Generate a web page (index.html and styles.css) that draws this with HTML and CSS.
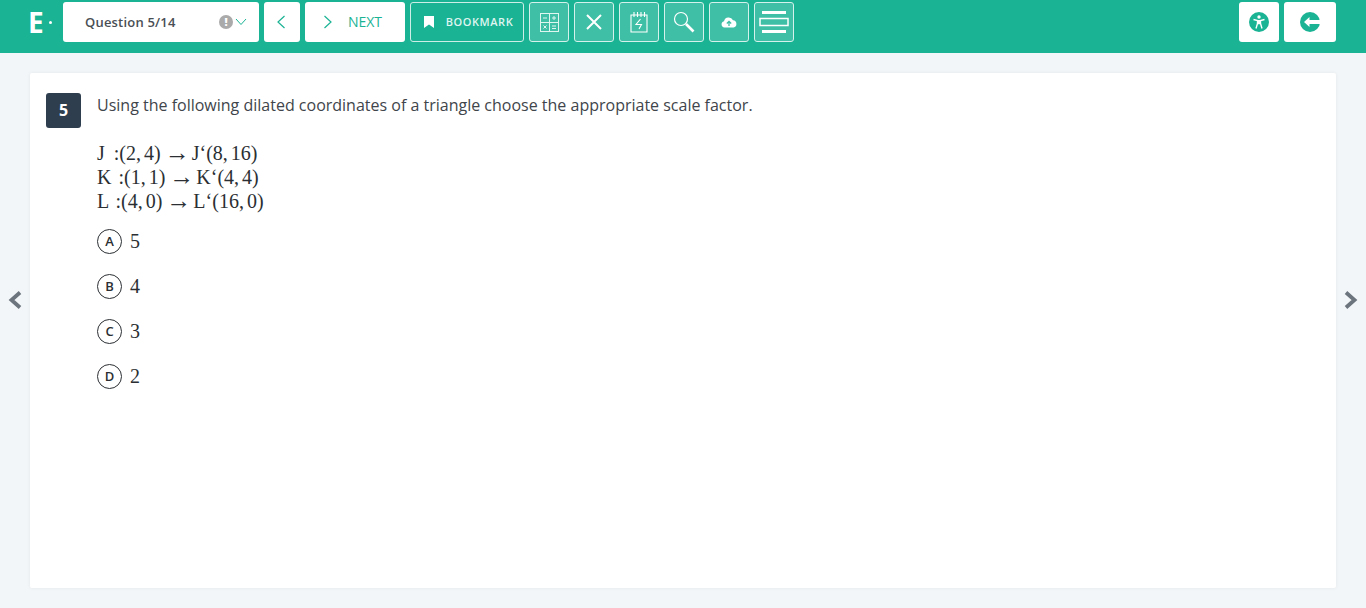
FILE: index.html
```html
<!DOCTYPE html>
<html lang="en">
<head>
<meta charset="utf-8">
<title>Question 5/14</title>
<link rel="stylesheet" href="styles.css">
</head>
<body>
<header class="topbar">
  <div class="brand"><span class="brand-e">E</span><span class="brand-dot"></span></div>
  <div class="select">
    <span class="select-label">Question 5/14</span>
    <span class="alert">!</span>
    <svg class="chev" width="12" height="8" viewBox="0 0 12 8"><path d="M1 1l5 5.500L11 1" fill="none" stroke="#1ab394" stroke-width="1"/></svg>
  </div>
  <button class="btn btn-white btn-prev"><svg width="10" height="14" viewBox="0 0 10 14"><path d="M8.500 1L2 7l6.500 6" fill="none" stroke="#1ab394" stroke-width="1.200"/></svg></button>
  <button class="btn btn-white btn-next"><svg width="10" height="14" viewBox="0 0 10 14"><path d="M1.500 1L8 7l-6.500 6" fill="none" stroke="#1ab394" stroke-width="1.200"/></svg><span>NEXT</span></button>
  <button class="btn btn-outline btn-bookmark"><svg width="10" height="12" viewBox="0 0 10 12"><path d="M0 0h10v12L5 8.500 0 12z" fill="#fff"/></svg><span>BOOKMARK</span></button>
  <button class="btn btn-tool"><svg width="19" height="19" viewBox="0 0 19 19" fill="none" stroke="#dff5f0" stroke-width="1"><rect x=".5" y=".5" width="18" height="18"/><path d="M9.500 .5v18M.5 9.500h18M3 5h4M12 5h4M14 3v4M3.500 12.500l3 3M6.500 12.500l-3 3M12 13h4M12 15.500h4"/></svg></button>
  <button class="btn btn-tool"><svg width="18" height="18" viewBox="0 0 18 18"><path d="M2 2l14 14M16 2L2 16" fill="none" stroke="#fff" stroke-width="2"/></svg></button>
  <button class="btn btn-tool"><svg width="18" height="22" viewBox="0 0 18 22" fill="none" stroke="#fff" stroke-width="1.100"><path d="M1 4h16v17H1zM4 1v5M7.500 1v5M11 1v5M14.500 1v5"/><path d="M10.500 8L6 13.500h5.500L9 18"/></svg></button>
  <button class="btn btn-tool"><svg width="22" height="22" viewBox="0 0 22 22" fill="none" stroke="#fff"><circle cx="8" cy="8" r="6.500" stroke-width="1.200"/><path d="M13 13l7.500 7.500" stroke-width="2.600"/></svg></button>
  <button class="btn btn-tool"><svg width="16" height="12" viewBox="0 0 16 12"><path d="M3.500 11.500a3.200 3.200 0 0 1-.5-6.300A4.800 4.800 0 0 1 12 4.200a3.700 3.700 0 0 1 .500 7.300z" fill="#fff"/><path d="M8 10V5.500M5.800 7.500L8 5.300l2.200 2.200" fill="none" stroke="#3fbfa5" stroke-width="1.300"/></svg></button>
  <button class="btn btn-tool"><svg width="30" height="22" viewBox="0 0 30 22" fill="none" stroke="#fff"><path d="M3 1.500h24M3 20.500h24" stroke-width="3"/><rect x="1" y="7.500" width="28" height="7" stroke-width="1.500"/></svg></button>
  <div class="topbar-right">
    <button class="btn btn-white btn-access"><svg width="20" height="20" viewBox="0 0 20 20"><circle cx="10" cy="10" r="10" fill="#1ab394"/><circle cx="10" cy="5" r="1.700" fill="#fff"/><path d="M4.500 7.500l4 1v3L7 16.500M15.500 7.500l-4 1v3l1.500 5M8.500 11.500h3" fill="none" stroke="#fff" stroke-width="1.400"/><rect x="8.500" y="8" width="3" height="3.500" fill="#fff"/></svg></button>
    <button class="btn btn-white btn-exit"><svg width="20" height="20" viewBox="0 0 20 20"><circle cx="10" cy="10" r="10" fill="#1ab394"/><path d="M4 10l5.500-5v3H20v4H9.500v3z" fill="#fff"/></svg></button>
  </div>
</header>
<button class="side-arrow side-left"><svg width="14" height="18" viewBox="0 0 14 18"><path d="M12 1.500L3.500 9l8.500 7.500" fill="none" stroke="#6c757d" stroke-width="3.800"/></svg></button>
<button class="side-arrow side-right"><svg width="14" height="18" viewBox="0 0 14 18"><path d="M2 1.500L10.500 9 2 16.500" fill="none" stroke="#6c757d" stroke-width="3.800"/></svg></button>
<main class="card">
  <div class="qnum">5</div>
  <div class="qbody">
    <p class="qtext">Using the following dilated coordinates of a triangle choose the appropriate scale factor.</p>
    <div class="math-block">
      <div><span class="pt pt-wide">J :</span><span class="tuple">(2, 4)</span><span class="arrow">→</span>J‘<span class="tuple">(8, 16)</span></div>
      <div><span class="pt">K :</span><span class="tuple">(1, 1)</span><span class="arrow">→</span>K‘<span class="tuple">(4, 4)</span></div>
      <div><span class="pt">L :</span><span class="tuple">(4, 0)</span><span class="arrow">→</span>L‘<span class="tuple">(16, 0)</span></div>
    </div>
    <div class="options">
      <div class="option"><span class="bubble">A</span><span class="opt-val">5</span></div>
      <div class="option"><span class="bubble">B</span><span class="opt-val">4</span></div>
      <div class="option"><span class="bubble">C</span><span class="opt-val">3</span></div>
      <div class="option"><span class="bubble">D</span><span class="opt-val">2</span></div>
    </div>
  </div>
</main>
</body>
</html>
```
FILE: styles.css
```css
* { box-sizing: border-box; }
html, body { height: 100%; }
body { margin: 0; height: 608px; overflow: hidden; background: #f3f6f9; font-family: "Open Sans", sans-serif; color: #343a40; position: relative; }
button { font-family: inherit; padding: 0; margin: 0; }

.topbar { height: 53px; background: #1ab394; display: flex; align-items: flex-start; padding: 2px 30px 0 28px; gap: 5px; }
.brand { width: 30px; height: 40px; display: flex; align-items: center; color: #fff; }
.brand-e { font-size: 28px; font-weight: 700; line-height: 40px; }
.brand-dot { width: 3px; height: 3px; border-radius: 50%; background: #fff; margin-left: 5px; }
.select { width: 196px; height: 40px; background: #fff; border-radius: 3px; display: flex; align-items: center; padding-left: 22px; position: relative; }
.select-label { font-size: 13px; font-weight: 560; color: #4a4f55; letter-spacing: .2px; flex: 1; }
.alert { width: 14px; height: 14px; border-radius: 50%; background: #aaa; color: #fff; font-size: 11px; font-weight: 800; line-height: 14px; text-align: center; margin-right: 2px; }
.chev { margin-right: 12px; }

.btn { height: 40px; border-radius: 3px; display: flex; align-items: center; justify-content: center; cursor: pointer; }
.btn-white { background: #fff; border: 0; }
.btn-prev { width: 36px; padding-right: 3px; }
.btn-next { width: 100px; gap: 15px; padding-right: 5px; padding-bottom: 1px; color: #1ab394; font-size: 14px; }
.btn-outline { width: 114px; background: transparent; border: 1px solid #cdeee7; color: #dff5f0; gap: 12px; padding-left: 3px; padding-bottom: 1px; font-size: 11px; font-weight: 560; letter-spacing: .55px; }
.btn-tool { width: 40px; background: #3fbfa5; border: 1px solid #d5f1eb; }
.topbar-right { margin-left: auto; display: flex; gap: 5px; }
.btn-access { width: 40px; }
.btn-exit { width: 52px; }

.side-arrow { position: absolute; top: 291px; width: 14px; height: 18px; background: none; border: 0; display: flex; }
.side-left { left: 8px; }
.side-right { right: 8px; }

.card { margin: 20px 30px 0; height: 515px; background: #fff; border-radius: 2px; box-shadow: 0 0 4px rgba(0,0,0,.06); padding: 20px 16px; display: flex; gap: 16px; }
.qnum { width: 35px; height: 35px; flex: none; background: #2f3e4e; color: #fff; border-radius: 3px; font-size: 16px; font-weight: 700; line-height: 35px; text-align: center; }
.qbody { flex: 1; }
.qtext { margin: 0; font-size: 16px; line-height: 24px; color: #3f454b; }
.math-block { margin-top: 24px; font-family: "Liberation Serif", serif; font-size: 20px; line-height: 24px; color: #2b2f33; }
.pt { word-spacing: 2px; }
.pt-wide { word-spacing: 4px; }
.tuple { word-spacing: -2px; }
.arrow { margin: 0 2px 0 4px; font-size: 25px; line-height: 0; vertical-align: -1px; }
.options { margin-top: 16px; display: flex; flex-direction: column; gap: 20px; }
.option { height: 25px; display: flex; align-items: center; gap: 8px; }
.bubble { width: 25px; height: 25px; border: 1px solid #2b2f33; border-radius: 50%; font-size: 13px; font-weight: 600; line-height: 23px; text-align: center; color: #2b2f33; }
.opt-val { font-family: "Liberation Serif", serif; font-size: 20px; color: #2b2f33; }
```
